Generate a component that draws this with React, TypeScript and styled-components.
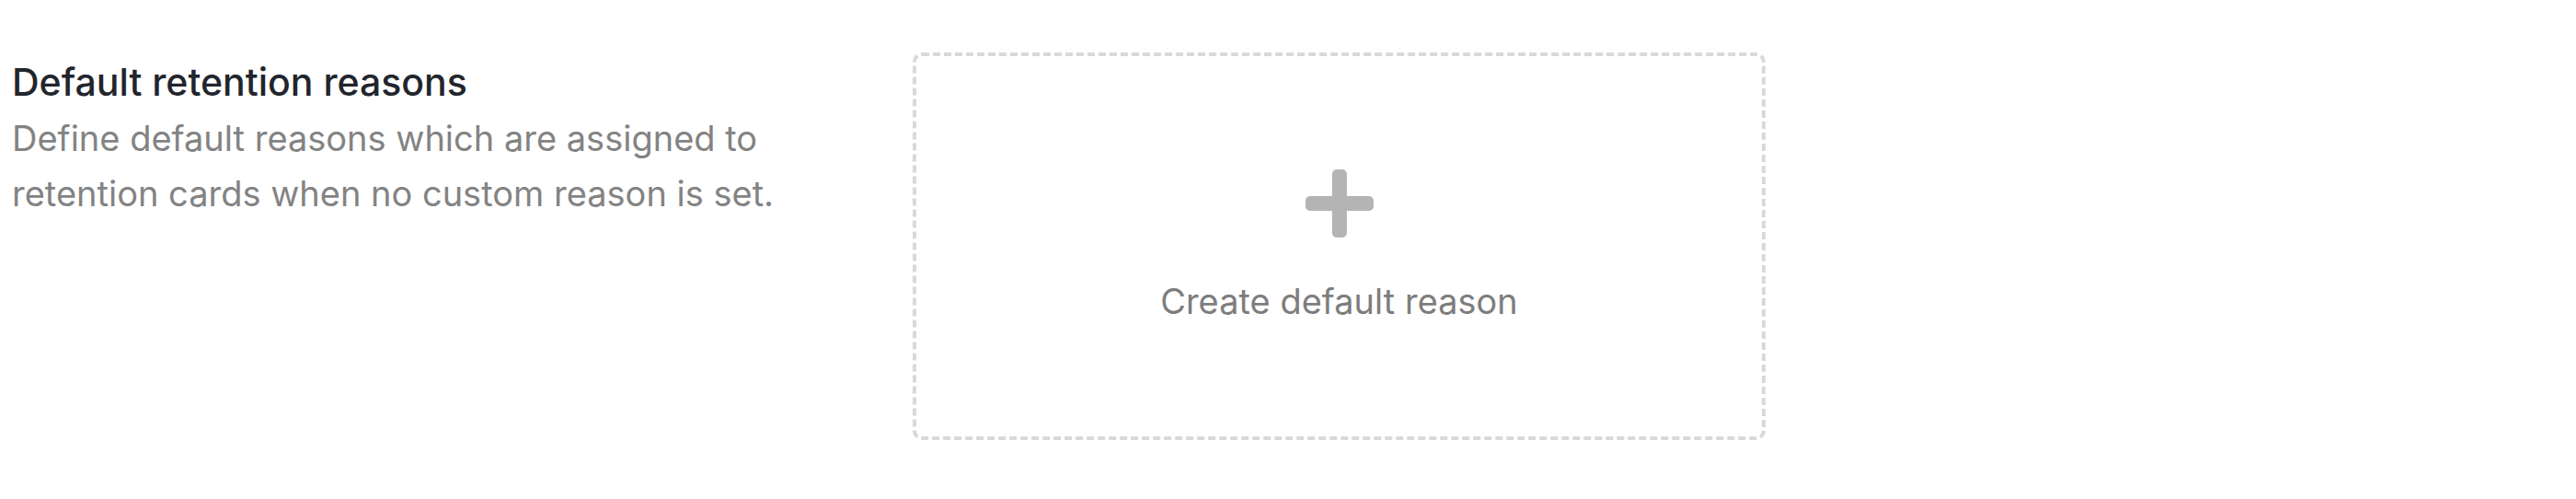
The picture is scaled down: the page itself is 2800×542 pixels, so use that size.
import React from 'react';
import styled, { createGlobalStyle } from 'styled-components';

const GlobalStyle = createGlobalStyle`
  html, body {
    margin: 0;
    padding: 0;
    background: #ffffff;
  }
  body {
    font-family: Inter, "Noto Sans", "Liberation Sans", sans-serif;
    -webkit-font-smoothing: antialiased;
  }
`;

const Section = styled.section`
  display: grid;
  grid-template-columns: 937px 927px;
  column-gap: 42px;
  align-items: start;
  padding: 57px 0 0 13px;
`;

const Intro = styled.div`
  display: flex;
  flex-direction: column;
  padding-top: 7px;
`;

const Title = styled.h2`
  margin: 0 0 6px;
  font-size: 41px;
  line-height: 50px;
  font-weight: 500;
  color: #22252c;
`;

const Description = styled.p`
  margin: 0;
  font-size: 38px;
  line-height: 60px;
  font-weight: 400;
  color: #838383;
`;

const CreateCard = styled.button`
  box-sizing: border-box;
  width: 927px;
  height: 421px;
  display: flex;
  flex-direction: column;
  align-items: center;
  justify-content: center;
  padding: 0;
  background: #ffffff;
  border: 4px dashed #d9d9d9;
  border-radius: 10px;
  cursor: pointer;
  font-family: inherit;
`;

const PlusIcon = styled.svg`
  display: block;
  width: 74px;
  height: 74px;
`;

const CardLabel = styled.span`
  margin-top: 45px;
  font-size: 38px;
  line-height: 48px;
  font-weight: 400;
  color: #7d7d7d;
`;

const Plus = () => (
  <PlusIcon viewBox="0 0 74 74" aria-hidden="true">
    <rect x="29" y="0" width="16" height="74" rx="5" fill="#b4b4b4" />
    <rect x="0" y="29" width="74" height="16" rx="5" fill="#b4b4b4" />
  </PlusIcon>
);

export default function App() {
  return (
    <>
      <GlobalStyle />
      <Section>
        <Intro>
          <Title>Default retention reasons</Title>
          <Description>
            Define default reasons which are assigned to
            <br />
            retention cards when no custom reason is set.
          </Description>
        </Intro>
        <CreateCard type="button">
          <Plus />
          <CardLabel>Create default reason</CardLabel>
        </CreateCard>
      </Section>
    </>
  );
}
